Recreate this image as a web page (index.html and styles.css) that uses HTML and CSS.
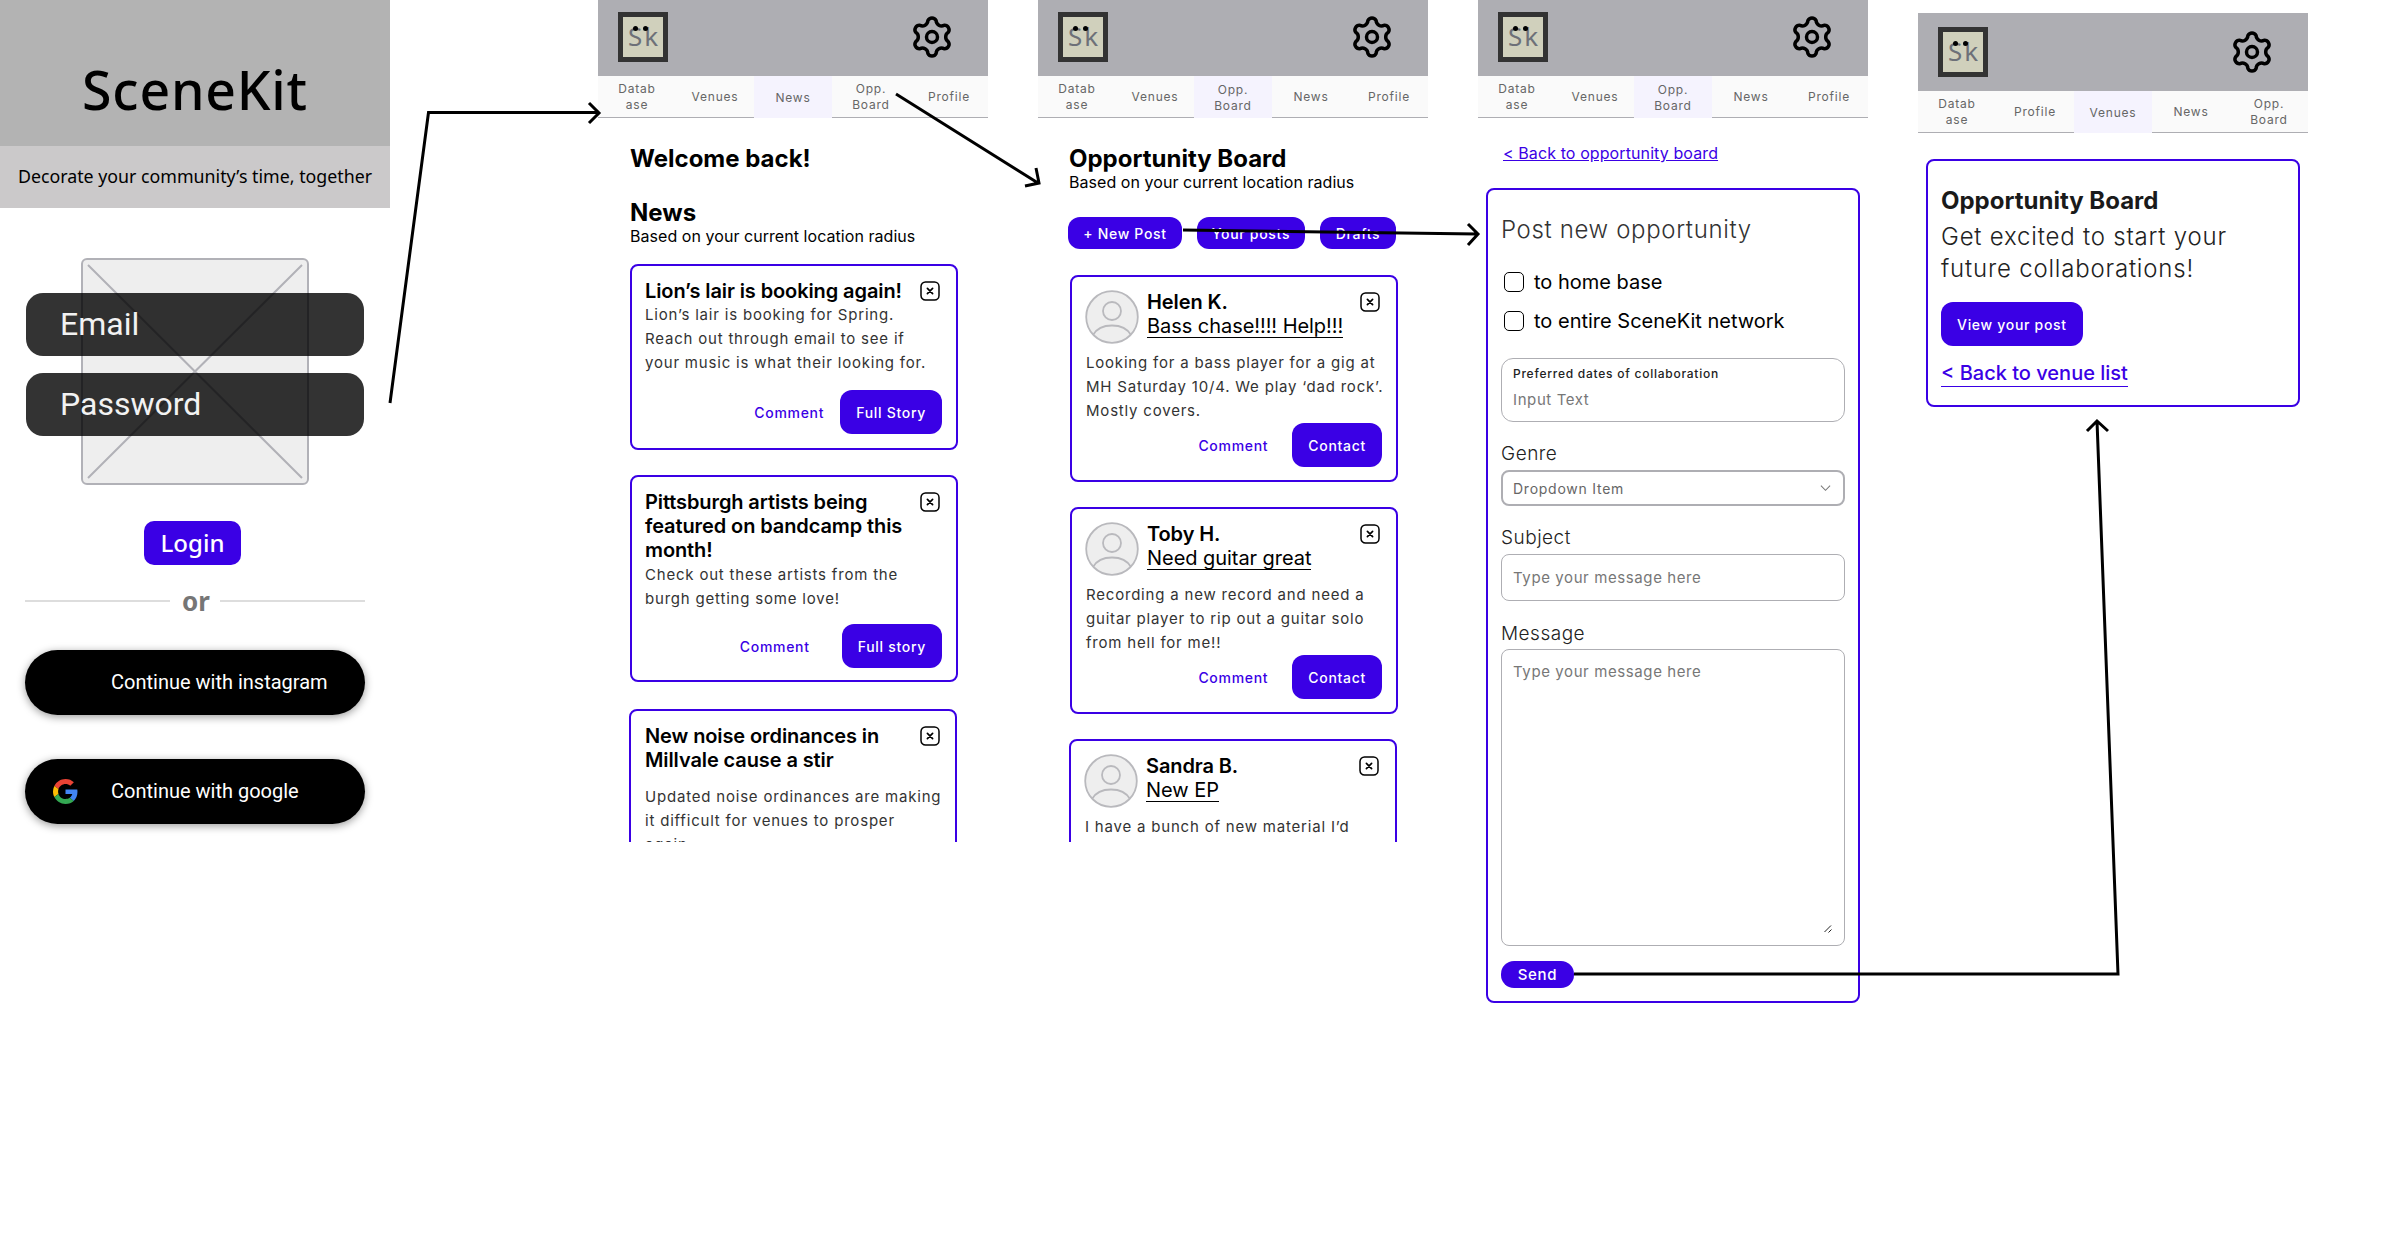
FILE: index.html
```html
<!DOCTYPE html>
<html lang="en">
<head>
<meta charset="utf-8">
<title>SceneKit wireframes</title>
<link rel="stylesheet" href="styles.css">
</head>
<body>
<svg class="defs" width="0" height="0">
  <symbol id="gear" viewBox="0 0 48 48">
    <path fill="none" stroke="#000" stroke-width="3.8" stroke-linejoin="round" d="M41.78 29.1A5 5 0 0 1 37.31 36.85A6 6 0 0 0 28.48 41.95A5 5 0 0 1 19.52 41.95A6 6 0 0 0 10.69 36.85A5 5 0 0 1 6.22 29.1A6 6 0 0 0 6.22 18.9A5 5 0 0 1 10.69 11.15A6 6 0 0 0 19.52 6.05A5 5 0 0 1 28.48 6.05A6 6 0 0 0 37.31 11.15A5 5 0 0 1 41.78 18.9A6 6 0 0 0 41.78 29.1Z"/>
    <circle cx="24" cy="24" r="6" fill="none" stroke="#000" stroke-width="3.8"/>
  </symbol>
  <symbol id="close" viewBox="0 0 20 20">
    <rect x="1" y="1" width="18" height="18" rx="4.5" fill="#fff" stroke="#000" stroke-width="1.5"/>
    <path d="M7.4 7.4l5.2 5.2M12.6 7.4l-5.2 5.2" stroke="#000" stroke-width="1.7" stroke-linecap="round"/>
  </symbol>
  <symbol id="avatar" viewBox="0 0 54 54">
    <circle cx="27" cy="27" r="25.8" fill="#eee" stroke="#b9b9bd" stroke-width="1.8"/>
    <circle cx="27" cy="21" r="9" fill="none" stroke="#b9b9bd" stroke-width="1.8"/>
    <path d="M8 45C12 38 19 35.5 27 35.5S42 38 46 45" fill="none" stroke="#b9b9bd" stroke-width="1.8"/>
  </symbol>
</svg>

<main class="canvas">

  <section class="board board-login">
    <header class="brand"><h1 class="brand-name">SceneKit</h1></header>
    <p class="tagline">Decorate your community’s time, together</p>
    <div class="placeholder">
      <svg class="placeholder-x" viewBox="0 0 224 223" preserveAspectRatio="none"><path d="M5 5L219 218M219 5L5 218" stroke="#b1b1b7" stroke-width="2" fill="none"/></svg>
    </div>
    <div class="login-field">Email</div>
    <div class="login-field login-field-second">Password</div>
    <button class="login-btn">Login</button>
    <div class="or-row"><span class="or-line"></span><span class="or-text">or</span><span class="or-line"></span></div>
    <button class="social"><span class="social-icon"></span>Continue with instagram</button>
    <button class="social social-second">
      <span class="social-icon">
        <svg class="google" viewBox="0 0 48 48">
          <path fill="#EA4335" d="M24 9.5c3.54 0 6.71 1.22 9.21 3.6l6.85-6.85C35.9 2.38 30.47 0 24 0 14.62 0 6.51 5.38 2.56 13.22l7.98 6.19C12.43 13.72 17.74 9.5 24 9.5z"/>
          <path fill="#4285F4" d="M46.98 24.55c0-1.57-.15-3.09-.38-4.55H24v9.02h12.94c-.58 2.96-2.26 5.48-4.78 7.18l7.73 6c4.51-4.18 7.09-10.36 7.09-17.65z"/>
          <path fill="#FBBC05" d="M10.53 28.59c-.48-1.45-.76-2.99-.76-4.59s.27-3.14.76-4.59l-7.98-6.19C.92 16.46 0 20.12 0 24c0 3.88.92 7.54 2.56 10.78l7.97-6.19z"/>
          <path fill="#34A853" d="M24 48c6.48 0 11.93-2.13 15.89-5.81l-7.73-6c-2.15 1.45-4.92 2.3-8.16 2.3-6.26 0-11.57-4.22-13.47-9.91l-7.98 6.19C6.51 42.62 14.62 48 24 48z"/>
        </svg>
      </span>Continue with google</button>
  </section>

  <section class="board board-news">
    <header class="topbar"><div class="logo"><span class="logo-s">S</span>k<i class="dot dot-a"></i><i class="dot dot-b"></i></div><svg class="gear"><use href="#gear"/></svg></header>
    <nav class="tabs"><a class="tab">Datab<br>ase</a><a class="tab">Venues</a><a class="tab tab-on">News</a><a class="tab">Opp.<br>Board</a><a class="tab">Profile</a></nav>
    <div class="content news-content">
      <h2 class="page-title">Welcome back!</h2>
      <h2 class="page-title news-title">News</h2>
      <p class="page-sub">Based on your current location radius</p>
      <article class="card card-news-1">
        <div class="card-head"><h3 class="card-title">Lion’s lair is booking again!</h3><svg class="close"><use href="#close"/></svg></div>
        <p class="card-body">Lion’s lair is booking for Spring.<br>Reach out through email to see if<br>your music is what their looking for.</p>
        <div class="card-actions"><a class="link-action">Comment</a><a class="btn">Full Story</a></div>
      </article>
      <article class="card card-news-2">
        <div class="card-head"><h3 class="card-title">Pittsburgh artists being<br>featured on bandcamp this<br>month!</h3><svg class="close"><use href="#close"/></svg></div>
        <p class="card-body">Check out these artists from the<br>burgh getting some love!</p>
        <div class="card-actions"><a class="link-action">Comment</a><a class="btn">Full story</a></div>
      </article>
      <article class="card card-news-3">
        <div class="card-head"><h3 class="card-title">New noise ordinances in<br>Millvale cause a stir</h3><svg class="close"><use href="#close"/></svg></div>
        <p class="card-body card-body-gap">Updated noise ordinances are making<br>it difficult for venues to prosper<br>again.</p>
      </article>
    </div>
  </section>

  <section class="board board-opps">
    <header class="topbar"><div class="logo"><span class="logo-s">S</span>k<i class="dot dot-a"></i><i class="dot dot-b"></i></div><svg class="gear"><use href="#gear"/></svg></header>
    <nav class="tabs"><a class="tab">Datab<br>ase</a><a class="tab">Venues</a><a class="tab tab-on">Opp.<br>Board</a><a class="tab">News</a><a class="tab">Profile</a></nav>
    <div class="content opps-content">
      <h2 class="page-title">Opportunity Board</h2>
      <p class="page-sub">Based on your current location radius</p>
      <div class="pills"><a class="pill pill-new">+ New Post</a><a class="pill pill-yours">Your posts</a><a class="pill pill-drafts">Drafts</a></div>
      <article class="card person-card person-first">
        <div class="person-head"><svg class="avatar"><use href="#avatar"/></svg><div class="person-text"><h3 class="card-title">Helen K.</h3><p class="person-sub"><span class="person-subject">Bass chase!!!! Help!!!</span></p></div><svg class="close"><use href="#close"/></svg></div>
        <p class="card-body person-body">Looking for a bass player for a gig at<br>MH Saturday 10/4. We play ‘dad rock’.<br>Mostly covers.</p>
        <div class="card-actions person-actions"><a class="link-action">Comment</a><a class="btn">Contact</a></div>
      </article>
      <article class="card person-card">
        <div class="person-head"><svg class="avatar"><use href="#avatar"/></svg><div class="person-text"><h3 class="card-title">Toby H.</h3><p class="person-sub"><span class="person-subject">Need guitar great</span></p></div><svg class="close"><use href="#close"/></svg></div>
        <p class="card-body person-body">Recording a new record and need a<br>guitar player to rip out a guitar solo<br>from hell for me!!</p>
        <div class="card-actions person-actions"><a class="link-action">Comment</a><a class="btn">Contact</a></div>
      </article>
      <article class="card person-card person-last">
        <div class="person-head"><svg class="avatar"><use href="#avatar"/></svg><div class="person-text"><h3 class="card-title">Sandra B.</h3><p class="person-sub"><span class="person-subject">New EP</span></p></div><svg class="close"><use href="#close"/></svg></div>
        <p class="card-body person-body">I have a bunch of new material I’d</p>
      </article>
    </div>
  </section>

  <section class="board board-form">
    <header class="topbar"><div class="logo"><span class="logo-s">S</span>k<i class="dot dot-a"></i><i class="dot dot-b"></i></div><svg class="gear"><use href="#gear"/></svg></header>
    <nav class="tabs"><a class="tab">Datab<br>ase</a><a class="tab">Venues</a><a class="tab tab-on">Opp.<br>Board</a><a class="tab">News</a><a class="tab">Profile</a></nav>
    <a class="back-small">&lt; Back to opportunity board</a>
    <form class="panel form-panel">
      <h2 class="form-title">Post new opportunity</h2>
      <label class="check check-first"><input type="checkbox" class="check-box">to home base</label>
      <label class="check"><input type="checkbox" class="check-box">to entire SceneKit network</label>
      <label class="date-field"><span class="date-label">Preferred dates of collaboration</span><input class="date-input" placeholder="Input Text"></label>
      <span class="field-label label-genre">Genre</span>
      <div class="dropdown">Dropdown Item<svg class="chev" viewBox="0 0 12 8"><path d="M1 1.5l5 5 5-5" fill="none" stroke="#777" stroke-width="1.1"/></svg></div>
      <span class="field-label label-subject">Subject</span>
      <input class="text-input" placeholder="Type your message here">
      <span class="field-label label-message">Message</span>
      <div class="area-wrap">
        <textarea class="text-area" placeholder="Type your message here"></textarea>
        <svg class="grip" viewBox="0 0 8 8"><path d="M.5 7L7 .5M4.5 7.5L7.5 4.5" stroke="#222" stroke-width="1" fill="none"/></svg>
      </div>
      <button type="button" class="send">Send</button>
    </form>
  </section>

  <section class="board board-done">
    <header class="topbar"><div class="logo"><span class="logo-s">S</span>k<i class="dot dot-a"></i><i class="dot dot-b"></i></div><svg class="gear"><use href="#gear"/></svg></header>
    <nav class="tabs"><a class="tab">Datab<br>ase</a><a class="tab">Profile</a><a class="tab tab-on">Venues</a><a class="tab">News</a><a class="tab">Opp.<br>Board</a></nav>
    <div class="panel done-panel">
      <h2 class="done-title">Opportunity Board</h2>
      <p class="done-text">Get excited to start your<br>future collaborations!</p>
      <a class="btn done-btn">View your post</a>
      <a class="back-big">&lt; Back to venue list</a>
    </div>
  </section>

  <svg class="arrows" viewBox="0 0 2384 1246">
    <path d="M390 403L428.5 112.5H598M589 103L599 113L589 123"/>
    <path d="M896 94L1038 183M1025 186L1039 183L1036 168"/>
    <path d="M1183 230L1477 234M1468 224L1478 234L1468 245"/>
    <path d="M1574 974H2118L2097 421M2087 431L2097 421L2108 431"/>
  </svg>
</main>
</body>
</html>
```

FILE: styles.css
```css
* { box-sizing: border-box; }
html, body { margin: 0; padding: 0; background: #fff; }
body { font-family: "Inter", "Liberation Sans", sans-serif; color: #000; overflow: hidden; }
h1, h2, h3, p { margin: 0; }
.defs { position: absolute; }
.canvas { position: relative; width: 2384px; height: 1246px; overflow: hidden; }
.arrows { position: absolute; left: 0; top: 0; width: 2384px; height: 1246px; pointer-events: none; }
.arrows path { fill: none; stroke: #000; stroke-width: 3; stroke-linejoin: miter; }

/* artboards on the free canvas */
.board { position: absolute; width: 390px; display: flex; flex-direction: column; overflow: hidden; }
.board-login { left: 0; top: 0; height: 850px; }
.board-news { left: 598px; top: -2px; height: 844px; }
.board-opps { left: 1038px; top: -2px; height: 844px; }
.board-form { left: 1478px; top: -2px; height: 1012px; overflow: visible; }
.board-done { left: 1918px; top: 13px; height: 400px; overflow: visible; }

/* login */
.brand { height: 146px; background: #b3b3b3; display: flex; justify-content: center; padding-top: 55px; }
.brand-name { font: 500 53.5px/70px "Noto Sans", sans-serif; letter-spacing: .8px; }
.tagline { height: 62px; background: #cbc9ca; font: 400 17.8px/60px "Noto Sans", sans-serif; text-align: center; white-space: nowrap; }
.placeholder { position: absolute; left: 81px; top: 258px; width: 228px; height: 227px; background: #eee; border: 2px solid #b1b1b7; border-radius: 6px; }
.placeholder-x { display: block; width: 100%; height: 100%; }
.login-field { position: relative; margin: 85px 26px 0; height: 63px; border-radius: 17px; background: rgba(0,0,0,.8); color: #f2f2f2; font: 400 32px/63px "Roboto", sans-serif; padding-left: 34px; }
.login-field-second { margin-top: 17px; }
.login-btn { margin: 85px 0 0 144px; width: 97px; height: 44px; border: 0; border-radius: 10px; background: #3a00e5; color: #fff; font: 500 24px/44px "Noto Sans", sans-serif; padding: 0; }
.or-row { display: flex; align-items: center; margin: 16px 25px 0; height: 40px; gap: 12px; }
.or-line { flex: 1; height: 2px; background: #ddd; }
.or-text { width: 26px; text-align: center; color: #767676; font: 700 26px/40px "Noto Sans", sans-serif; }
.social { display: flex; align-items: center; margin: 29px 0 0 25px; width: 340px; height: 65px; border: 0; border-radius: 33px; background: #000; color: #fff; font: 400 20px/65px "Roboto", sans-serif; padding: 0; box-shadow: 0 2px 8px rgba(0,0,0,.4); }
.social-second { margin-top: 44px; }
.social-icon { width: 86px; padding-left: 28px; display: flex; }
.google { width: 25px; height: 25px; }

/* app chrome */
.topbar { flex: none; height: 78px; background: #aeaeb3; display: flex; align-items: center; justify-content: space-between; padding: 0 34px 0 20px; }
.logo { position: relative; width: 50px; height: 50px; background: #d0d0bc; border: 5px solid #333; color: #6d7078; font: 400 26px/39px "Noto Sans", sans-serif; text-align: center; }
.logo-s { margin-right: 2px; }
.dot { position: absolute; width: 5px; height: 5px; border-radius: 50%; background: #000; top: 9px; }
.dot-a { left: 10px; }
.dot-b { left: 20px; }
.gear { width: 44px; height: 44px; }
.tabs { flex: none; display: grid; grid-template-columns: repeat(5, 78px); height: 42px; background: #fafafa; border-bottom: 1px solid #aeaeb3; }
.tab { display: flex; align-items: center; justify-content: center; text-align: center; font-size: 12px; line-height: 16px; letter-spacing: .8px; color: #666; padding-top: 1px; }
.tab-on { background: #f5f3fe; margin-bottom: -1px; }

/* page headings */
.content { display: flex; flex-direction: column; }
.news-content { padding: 27px 0 0 32px; }
.opps-content { padding: 27px 0 0 31px; }
.page-title { font-size: 24px; line-height: 28px; font-weight: 700; }
.news-title { margin-top: 26px; }
.page-sub { font-size: 16px; line-height: 19px; letter-spacing: .05px; }

/* cards */
.card { width: 328px; border: 2px solid #3a00e5; border-radius: 8px; padding: 13px 14px 14px 13px; background: #fff; flex: none; }
.card-news-1 { margin-top: 18px; }
.card-news-2 { margin-top: 25px; padding-bottom: 12px; }
.card-news-2 .card-body { margin-top: 1px; }
.card-news-2 .card-actions { margin-top: 13px; }
.card-news-2 .link-action { padding-right: 32px; }
.card-news-3 { margin: 27px 0 0 -1px; padding-left: 14px; }
.card-head { display: flex; justify-content: space-between; align-items: flex-start; }
.card-title { font-size: 20px; line-height: 24px; font-weight: 600; letter-spacing: -.1px; }
.close { flex: none; width: 20px; height: 20px; margin: 2px 2px 0 0; }
.card-news-3 .close { margin-right: 1px; }
.card-body { font-size: 15px; line-height: 24px; letter-spacing: .8px; color: #333; white-space: nowrap; }
.card-news-3 .card-body-gap { margin-top: 13px; }
.card-actions { display: flex; justify-content: flex-end; align-items: center; margin-top: 15px; }
.link-action { color: #3a00e5; font-size: 14px; font-weight: 500; letter-spacing: .7px; padding: 0 16px; }
.btn { background: #3a00e5; color: #fff; border-radius: 12px; height: 44px; padding: 0 16px; display: flex; align-items: center; font-size: 14px; font-weight: 500; letter-spacing: .7px; white-space: nowrap; }
.pills { display: flex; gap: 15px; margin-top: 25px; margin-left: -1px; }
.pill { height: 32px; border-radius: 12px; background: #3a00e5; color: #fff; font-size: 14px; font-weight: 500; letter-spacing: .7px; display: flex; align-items: center; justify-content: center; }
.pill-new { width: 114px; }
.pill-yours { width: 108px; }
.pill-drafts { width: 76px; }
.person-card { margin: 25px 0 0 1px; padding-bottom: 13px; }
.person-first { margin-top: 26px; }
.person-last { margin: 25px 0 0; }
.person-head { display: flex; align-items: flex-start; }
.avatar { flex: none; width: 54px; height: 54px; }
.person-text { flex: 1; margin-left: 8px; }
.person-sub { font-size: 20px; line-height: 24px; letter-spacing: -.05px; }
.person-subject { display: inline-block; border-bottom: 1.5px solid #000; line-height: 22px; }
.person-body { margin-top: 7px; padding-left: 1px; }
.person-actions { margin-top: 0; }
.person-actions .link-action { padding-right: 24px; }

/* form */
.back-small { align-self: flex-start; margin: 25px 0 0 25px; font-size: 16px; line-height: 20px; letter-spacing: .1px; color: #3a00e5; text-decoration: underline; white-space: nowrap; }
.panel { width: 374px; margin-left: 8px; border: 2px solid #3a00e5; border-radius: 8px; background: #fff; display: flex; flex-direction: column; padding: 0 13px; flex: none; }
.form-panel { margin-top: 25px; height: 815px; padding-top: 25px; }
.form-title { font-size: 24px; line-height: 30px; font-weight: 300; letter-spacing: .65px; color: #333; }
.check { display: flex; align-items: center; font-size: 20px; line-height: 24px; height: 24px; }
.check-first { margin-top: 25px; }
.check + .check { margin-top: 15px; }
.check-box { appearance: none; -webkit-appearance: none; width: 20px; height: 20px; margin: 0 10px 0 3px; border: 1.5px solid #000; border-radius: 5px; background: #fff; }
.date-field { display: flex; flex-direction: column; height: 64px; margin-top: 25px; border: 1px solid #aeaeb3; border-radius: 12px; padding: 7px 11px 0; }
.date-label { font-size: 12px; line-height: 16px; letter-spacing: .75px; color: #222; font-weight: 500; }
.date-input { border: 0; outline: 0; padding: 0; margin-top: 7px; height: 22px; font: 400 15px/22px "Inter", sans-serif; letter-spacing: .6px; background: transparent; }
.date-input::placeholder, .text-input::placeholder, .text-area::placeholder { color: #777; opacity: 1; }
.field-label { font-size: 19px; line-height: 22px; letter-spacing: .5px; color: #222; font-weight: 300; }
.label-genre { margin-top: 21px; }
.label-subject { margin-top: 21px; }
.label-message { margin-top: 22px; }
.dropdown { display: flex; align-items: center; justify-content: space-between; height: 36px; margin-top: 5px; border: 2px solid #aeaeb3; border-radius: 8px; padding: 0 10px; font-size: 14px; letter-spacing: .75px; color: #666; }
.chev { width: 11px; height: 8px; margin-right: 2px; }
.text-input { height: 47px; margin-top: 5px; border: 1px solid #aeaeb3; border-radius: 8px; padding: 0 11px; font: 400 15px "Inter", sans-serif; letter-spacing: .6px; outline: 0; }
.area-wrap { position: relative; height: 297px; margin-top: 4px; }
.text-area { display: block; width: 100%; height: 100%; border: 1px solid #aeaeb3; border-radius: 8px; padding: 13px 11px; font: 400 15px/18px "Inter", sans-serif; letter-spacing: .6px; outline: 0; resize: none; }
.grip { position: absolute; right: 13px; bottom: 13px; width: 8px; height: 8px; }
.send { align-self: flex-start; margin-top: 15px; width: 73px; height: 27px; border: 0; border-radius: 13px; background: #3a00e5; color: #fff; font: 500 15px/27px "Inter", sans-serif; letter-spacing: .7px; padding: 0; }

/* confirmation */
.done-panel { margin-top: 26px; height: 248px; padding-top: 25px; }
.done-title { font-size: 24px; line-height: 30px; font-weight: 700; color: #1a1a1a; }
.done-text { font-size: 24px; line-height: 32px; font-weight: 300; letter-spacing: .8px; color: #222; margin-top: 5px; white-space: nowrap; }
.done-btn { align-self: flex-start; margin-top: 17px; }
.back-big { align-self: flex-start; margin-top: 15px; font-size: 20px; line-height: 25px; font-weight: 500; color: #3a00e5; border-bottom: 1px solid #3a00e5; }
```
